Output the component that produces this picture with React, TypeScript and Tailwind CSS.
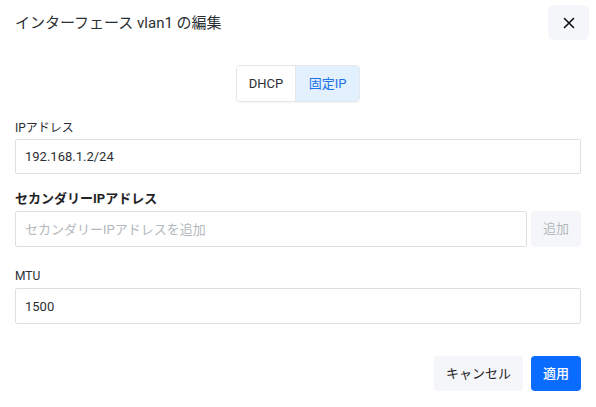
import React, { useState } from 'react';

const App: React.FC = () => {
  const [mode, setMode] = useState<'dhcp' | 'static'>('static');
  const [ip, setIp] = useState('192.168.1.2/24');
  const [secondary, setSecondary] = useState('');
  const [mtu, setMtu] = useState('1500');

  return (
    <div
      className="w-[596px] h-[407px] bg-white px-[15px] text-[#212529] overflow-hidden"
      style={{ fontFamily: 'Roboto, "Noto Sans CJK JP", sans-serif' }}
    >
      {/* Header */}
      <div className="flex items-center justify-between pt-[5px] h-[40px]">
        <h2 className="text-[15px] leading-[20px] font-normal text-[#2b2f33]">インターフェース vlan1 の編集</h2>
        <button className="w-[41px] h-[35px] -mr-[8px] rounded-md bg-[#f5f6f9] flex items-center justify-center text-[#111]">
          <svg width="12" height="12" viewBox="0 0 12 12" fill="none" stroke="currentColor" strokeWidth="1.6" strokeLinecap="round">
            <path d="M1.5 1.5l9 9M10.5 1.5l-9 9" />
          </svg>
        </button>
      </div>

      {/* Mode toggle */}
      <div className="flex justify-center mt-[25px]">
        <div className="flex h-[37px] rounded-[4px] border border-[#e4e7eb] overflow-hidden shadow-[0_1px_1px_rgba(0,0,0,0.04)]">
          <button
            onClick={() => setMode('dhcp')}
            className={`w-[59px] text-[13px] border-r border-[#e4e7eb] ${mode === 'dhcp' ? 'bg-[#e3f0fd] text-[#1a73e8]' : 'bg-white text-[#2b2f33]'}`}
          >
            DHCP
          </button>
          <button
            onClick={() => setMode('static')}
            className={`w-[63px] text-[13px] ${mode === 'static' ? 'bg-[#e3f0fd] text-[#1a73e8]' : 'bg-white text-[#2b2f33]'}`}
          >
            固定IP
          </button>
        </div>
      </div>

      {/* IP address */}
      <div className="mt-[18px]">
        <label className="block text-[12px] leading-[16px] text-[#2b2f33] mb-[3px]">IPアドレス</label>
        <input
          value={ip}
          onChange={(e) => setIp(e.target.value)}
          className="w-full h-[35px] px-[9px] text-[13px] border border-[#dcdfe3] rounded-[2px] outline-none text-[#2b2f33]"
        />
      </div>

      {/* Secondary IP */}
      <div className="mt-[17px]">
        <label className="block text-[13px] leading-[16px] font-bold text-[#1f2326] mb-[4px]">セカンダリーIPアドレス</label>
        <div className="flex gap-[4px]">
          <input
            value={secondary}
            onChange={(e) => setSecondary(e.target.value)}
            placeholder="セカンダリーIPアドレスを追加"
            className="flex-1 h-[36px] px-[9px] text-[13px] border border-[#dcdfe3] rounded-[2px] outline-none placeholder:text-[#b3b8bd]"
          />
          <button className="w-[50px] h-[36px] rounded-[4px] bg-[#f5f6f9] text-[13px] text-[#b3b8bd]">追加</button>
        </div>
      </div>

      {/* MTU */}
      <div className="mt-[21px]">
        <label className="block text-[12px] leading-[16px] text-[#2b2f33] mb-[4px]">MTU</label>
        <input
          value={mtu}
          onChange={(e) => setMtu(e.target.value)}
          className="w-full h-[36px] px-[9px] text-[13px] border border-[#dcdfe3] rounded-[2px] outline-none text-[#2b2f33]"
        />
      </div>

      {/* Footer */}
      <div className="flex justify-end gap-[8px] mt-[32px]">
        <button className="w-[89px] h-[35px] rounded-[4px] bg-[#f5f6f9] text-[13px] text-[#1f2326]">キャンセル</button>
        <button className="w-[50px] h-[35px] rounded-[4px] bg-[#0a6cff] text-[13px] text-white font-medium">適用</button>
      </div>
    </div>
  );
};

export default App;
